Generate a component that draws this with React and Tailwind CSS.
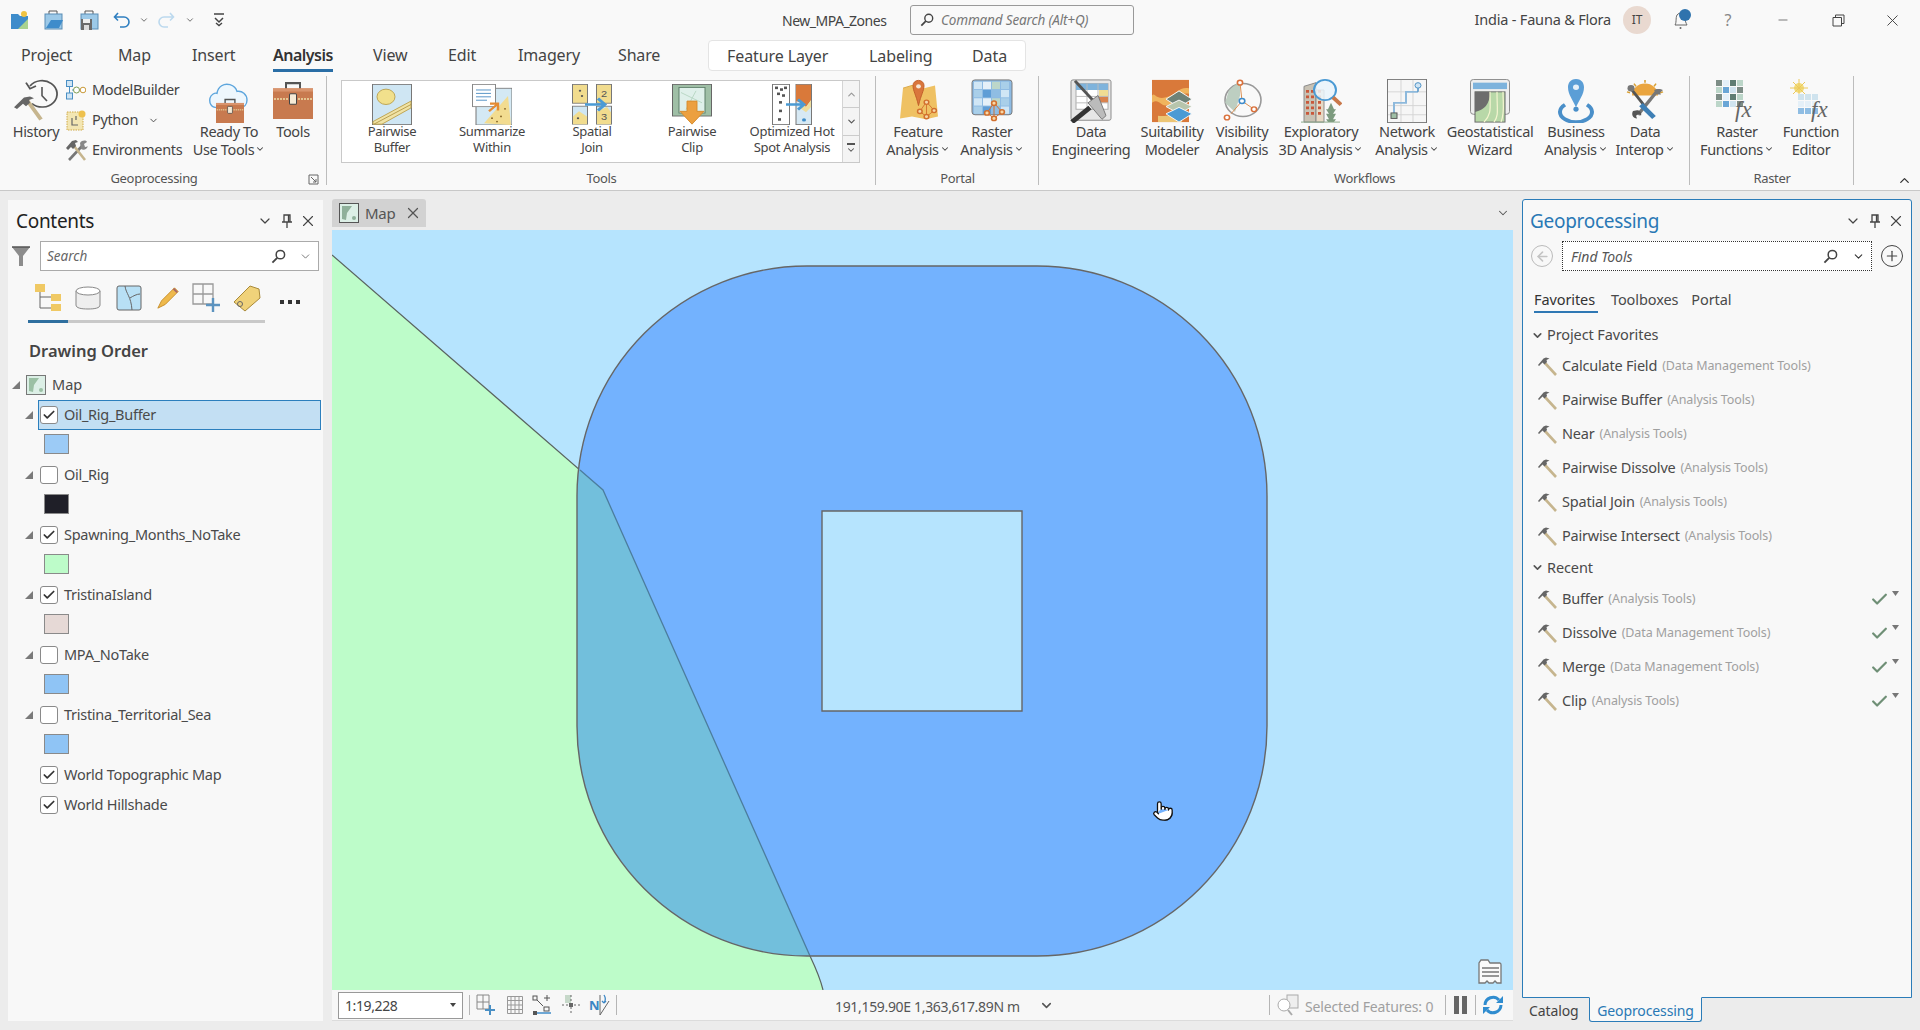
import React from "react";
import { ChevronDown, ChevronUp, X, Check, Minus, Pointer, ArrowLeft, Plus } from "lucide-react";

const Dn = ({ s = 10, c = "#444", w = 2 }) => <ChevronDown size={s} color={c} strokeWidth={w} className="shrink-0" />;

const Mag = ({ s = 16 }) => (
  <svg width={s} height={s} viewBox="0 0 16 16" fill="none" className="shrink-0">
    <circle cx="10" cy="6" r="4.5" stroke="#444" strokeWidth="1.6" />
    <path d="M6.6 9.4 1.5 14.5" stroke="#444" strokeWidth="2" />
  </svg>
);
const PinI = () => (
  <svg width="12" height="14" viewBox="0 0 12 14" fill="none" className="shrink-0">
    <path d="M3 1h6v7H3zM1 8h10M6 8v6M7.5 1v7" stroke="#444" strokeWidth="1.3" />
  </svg>
);
const Hammer = ({ s = 21 }) => (
  <svg width={s} height={s} viewBox="0 0 21 21" fill="none" className="shrink-0">
    <path d="M7.5 6.5 19 19" stroke="#c6b58e" strokeWidth="2.6" />
    <path d="M1 9 6.5 2.5 9 1.5 12.5 2.5 9.5 4 10 6 7.5 8.5 5.5 6.5 2 10z" fill="#666" />
  </svg>
);
const Tri = () => (
  <svg width="8" height="8" viewBox="0 0 8 8" className="shrink-0">
    <path d="M8 0v8H0z" fill="#7a7a7a" />
  </svg>
);
const Case = ({ x = 0, y = 0, w = 40, h = 36 }) => (
  <g transform={`translate(${x} ${y}) scale(${w / 40} ${h / 36})`}>
    <path d="M13 8V2h14v6" fill="none" stroke="#555" strokeWidth="2" />
    <rect x="0" y="7" width="40" height="29" fill="#c87a4f" />
    <rect x="0" y="7" width="40" height="3" fill="#d9946d" />
    <path d="M1 17h38" stroke="#eedfa8" strokeWidth="1.4" strokeDasharray="2 1" />
    <rect x="16.5" y="12" width="7" height="10" rx="1" fill="#f5ead6" stroke="#444" />
  </g>
);
const Net = ({ x = 0, y = 0, k = 1 }) => (
  <g transform={`translate(${x} ${y}) scale(${k})`} fill="none" stroke="#d2702e" strokeWidth="1.6">
    <path d="M10 2 3 13l7 6 8-7zM10 2l0 17" strokeWidth="1" />
    <circle cx="10" cy="2.5" r="2.4" fill="#f7d8a8" />
    <circle cx="3" cy="13" r="2.4" fill="#f7d8a8" />
    <circle cx="18" cy="12" r="2.4" fill="#f7d8a8" />
    <circle cx="10" cy="19" r="2.4" fill="#f7d8a8" />
  </g>
);
const Sv = ({ w = 42, h = 44, children }) => (
  <svg width={w} height={h} viewBox={`0 0 ${w} ${h}`} preserveAspectRatio="none" fill="none" className="shrink-0">{children}</svg>
);
const Grid = ({ x, y, n = 4, m = 4, c = 9, colors }) => {
  const out = [];
  for (let i = 0; i < n; i++) for (let j = 0; j < m; j++)
    out.push(<rect key={i + "-" + j} x={x + j * c} y={y + i * c} width={c - 1} height={c - 1} fill={colors[(i * 3 + j * 5) % colors.length]} />);
  return <g>{out}</g>;
};

const I = {
  PairBuffer: () => (
    <Sv w={40} h={48}>
      <rect x="0.5" y="0.5" width="39" height="47" fill="#cfe6f3" stroke="#777" />
      <circle cx="14" cy="15" r="9" fill="#f1e08c" stroke="#bba14e" />
      <path d="M1 44 39 20v8L10 47H1z" fill="#f0e3a6" stroke="#bba14e" />
      <path d="M2 47 39 24" stroke="#b49a4a" />
    </Sv>
  ),
  Summ: () => (
    <Sv w={40} h={48}>
      <rect x="4" y="5" width="36" height="43" fill="#d4e9f4" stroke="#777" />
      <path d="M12 46 36 14l3 34z" fill="#f2dc90" />
      <rect x="0.5" y="0.5" width="23" height="26" fill="#fff" stroke="#888" />
      <path d="M4 7h15M4 11h15M4 15h15M4 19h11" stroke="#4f8fc4" />
      <path d="M17 32l9-9m-8 0h8v8" stroke="#e58b33" strokeWidth="2.4" />
      <g fill="#8a6a2c"><circle cx="20" cy="40" r="1" /><circle cx="29" cy="38" r="1" /><circle cx="33" cy="29" r="1" /><circle cx="25" cy="44" r="1" /></g>
    </Sv>
  ),
  Join: () => (
    <Sv w={40} h={48}>
      <rect x="0.5" y="0.5" width="15" height="22" fill="#f1dc8e" stroke="#777" />
      <rect x="24.5" y="0.5" width="15" height="22" fill="#f1dc8e" stroke="#777" />
      <rect x="0.5" y="26" width="15" height="21" fill="#cfe6f3" stroke="#777" />
      <rect x="24.5" y="26" width="15" height="21" fill="#cfe6f3" stroke="#777" />
      <path d="M1 47v-9l6-6 8 6v9zM25 47V32l10-5 4 6v14z" fill="#f1dc8e" />
      <circle cx="8" cy="8" r="1.2" fill="#555" /><circle cx="6" cy="40" r="1.2" fill="#555" /><circle cx="10" cy="14" r="1.2" fill="#555" />
      <text x="29" y="15" fontSize="11" fill="#555" fontFamily="Liberation Sans">2</text>
      <text x="29" y="42" fontSize="11" fill="#555" fontFamily="Liberation Sans">3</text>
      <path d="M13 24h20m-7-7 7 7-7 7" stroke="#4a9ad4" strokeWidth="3" />
    </Sv>
  ),
  Clip: () => (
    <Sv w={40} h={48}>
      <rect x="0.5" y="0.5" width="39" height="37" fill="#9fbfa6" stroke="#666" />
      <rect x="7" y="4" width="26" height="30" fill="#dff0ea" stroke="#5d7f68" />
      <path d="M9 10 30 22M14 30 24 8" stroke="#b7d6c2" />
      <path d="M15 20h10v12h7L20 47 8 32h7z" fill="#eca03f" stroke="#d58a2c" />
    </Sv>
  ),
  Hot: () => (
    <Sv w={40} h={48}>
      <rect x="0.5" y="0.5" width="17" height="47" fill="#fff" stroke="#777" />
      <rect x="24" y="0.5" width="15.5" height="47" fill="#d7e9f4" stroke="#777" />
      <path d="M24 1h15v18l-5 8-5-5-5-2z" fill="#d9793a" />
      <path d="M29 22l5 5 5-8v8l-5 6-6-5z" fill="#eedd9b" />
      <g fill="#555">
        <rect x="3" y="3" width="3" height="3" /><rect x="8" y="5" width="3" height="3" /><rect x="12" y="3" width="3" height="3" /><rect x="5" y="10" width="3" height="3" /><rect x="10" y="12" width="3" height="3" /><rect x="7" y="20" width="3" height="3" /><rect x="7" y="30" width="3" height="3" /><rect x="6" y="40" width="3" height="3" />
      </g>
      <circle cx="32" cy="42" r="2" fill="#3f8dc9" />
      <path d="M14 24h18m-6-6 6 6-6 6" stroke="#4a9ad4" strokeWidth="3" />
    </Sv>
  ),
  Feature: () => (
    <Sv w={42} h={48}>
      <path d="M6 10 15 7l12 3 11-3 3 34-12 3-14-3-12 2z" fill="#efc163" />
      <path d="M6 10 15 7l12 3" stroke="#d9a645" />
      <path d="M16 4a5.5 5.500 0 0 1 11 0c0 6-3 10-5.500 22C19 14 16 10 16 4z" transform="translate(0 3)" fill="#d9763c" stroke="#c05f2a" />
      <circle cx="21.5" cy="8" r="2.4" fill="#f5e7d6" />
      <Net x={20} y={23} k={0.95} />
    </Sv>
  ),
  RasterA: () => (
    <Sv w={42} h={48}>
      <rect x="1" y="1" width="40" height="38" rx="3" fill="#8ebbe3" stroke="#777" />
      <Grid x={3} y={3} n={4} m={4} c={9} colors={["#d0e6f5", "#8fbde3", "#5f9ed6", "#a9cfe9", "#bcd6c9", "#e5f0f8"]} />
      <Net x={13} y={24} k={1} />
    </Sv>
  ),
  DataEng: () => (
    <Sv w={42} h={48}>
      <rect x="1" y="1" width="40" height="44" rx="2" fill="#e6e6e6" stroke="#888" />
      <rect x="6" y="5" width="32" height="28" fill="#fff" stroke="#aaa" />
      <rect x="6" y="5" width="32" height="7" fill="#7eb3dc" />
      <rect x="29" y="12" width="9" height="7" fill="#f0dc93" /><rect x="29" y="19" width="9" height="7" fill="#d9824d" />
      <path d="M6 19h32M6 26h32M17 5v28M28 5v28" stroke="#bbb" />
      <path d="M5 2 32 34" stroke="#555" strokeWidth="3" />
      <path d="M20 26 30 18l8 22-4 4z" fill="#bbb" stroke="#777" transform="translate(-2 0)" />
      <path d="M20 31 2 47" stroke="#333" strokeWidth="5" />
    </Sv>
  ),
  Suit: () => (
    <Sv w={40} h={48}>
      <rect x="0" y="1" width="37" height="46" fill="#d9793a" />
      <path d="M0 26c8-6 8 6 17 2s10-14 20-12v-6C27 8 25 17 14 20S3 14 0 18z" fill="#f0b45d" />
      <path d="M6 40c8 2 14-4 24 3v4H6z" fill="#ecc574" />
      <path d="M27 13 40 22 27 31 14 22z" fill="#6f8277" stroke="#f8f8f8" />
      <path d="M27 23 40 30 27 38 14 30z" fill="#b7c5ac" stroke="#f8f8f8" />
      <path d="M27 31 40 38 27 47 14 38z" fill="#4a9ad4" stroke="#f8f8f8" />
    </Sv>
  ),
  Vis: () => (
    <Sv w={40} h={48}>
      <circle cx="21" cy="23" r="18" stroke="#999" strokeWidth="1.6" />
      <path d="M7 12 18 2v16l-5 18-10-10z" fill="#b6c9ba" opacity=".9" />
      <path d="M9 38 20 24 32 33M20 24 18 4" stroke="#d98a4a" />
      <g fill="#fff" stroke="#d9703a" strokeWidth="1.6"><circle cx="18" cy="4" r="2.6" /><circle cx="32" cy="33" r="2.6" /><circle cx="5" cy="42" r="2.6" /></g>
      <circle cx="20" cy="24" r="2.8" fill="#fff" stroke="#3e8ccb" strokeWidth="1.6" />
    </Sv>
  ),
  Expl: () => (
    <Sv w={42} h={48}>
      <path d="M4 47V8l12-4v43z" fill="#c9c2b4" stroke="#888" />
      <path d="M16 12h8v35h-8z" fill="#e7d9c4" stroke="#888" />
      <g fill="#c9583a">
        {[12, 18, 24, 30, 36].map((y) => <React.Fragment key={y}><rect x="6" y={y} width="3" height="3" /><rect x="11" y={y} width="3" height="3" /><rect x="18" y={y} width="3" height="3" /></React.Fragment>)}
      </g>
      <circle cx="25" cy="12" r="11" fill="#eaf4fb" fillOpacity=".85" stroke="#4a9ad4" strokeWidth="2" />
      <path d="M33 20 41 28" stroke="#c9784a" strokeWidth="4" />
      <path d="M28 47 26 44h3l-3-6h3l-3-5h2l3-7 3 7h2l-3 5h3l-3 6h3l-2 3z" fill="#7d9b7f" />
      <path d="M1 47h39" stroke="#8aa88a" />
    </Sv>
  ),
  Network: () => (
    <Sv w={40} h={48}>
      <rect x="0.5" y="0.5" width="39" height="47" fill="#f6f6f6" stroke="#777" />
      <path d="M1 14h38M1 29h38M1 39h38M14 1v46M26 1v46" stroke="#d4d4d4" />
      <path d="M7 38V26h12V14h12" stroke="#8db9dc" strokeWidth="2" fill="none" />
      <path d="M31 14V8" stroke="#4a8fc4" strokeWidth="1.5" />
      <circle cx="31" cy="7" r="3" fill="#cfe4f3" stroke="#4a8fc4" />
      <rect x="4" y="37" width="6" height="6" fill="#9fbfa6" stroke="#555" />
    </Sv>
  ),
  Geo: () => (
    <Sv w={40} h={48}>
      <rect x="0.5" y="0.5" width="39" height="38" rx="3" fill="#eee" stroke="#888" />
      <rect x="3" y="4" width="34" height="7" fill="#7eb3dc" />
      <rect x="5" y="14" width="30" height="33" fill="#b8d8a8" stroke="#666" />
      <path d="M5 14h15c0 14-6 20-15 22z" fill="#6d6d6d" />
      <path d="M20 14c0 18 2 24-6 33M27 14c0 20 2 26-3 33M33 14c0 14 2 22-2 33" stroke="#f5f5d0" strokeWidth="1.2" />
    </Sv>
  ),
  Biz: () => (
    <Sv w={42} h={48}>
      <path d="M10 28a16 11 0 1 0 22 0" stroke="#4a8fc9" strokeWidth="4" />
      <path d="M21 0c6 0 8 5 8 9 0 8-5 14-8 22-3-8-8-14-8-22 0-4 2-9 8-9z" fill="#5b9ed6" />
      <circle cx="21" cy="9" r="3" fill="#e7f1f9" />
      <circle cx="21" cy="33" r="2.6" fill="#4a8fc9" />
    </Sv>
  ),
  Interop: () => (
    <Sv w={42} h={48}>
      <path d="M8 18a13 13 0 0 1 26 0z" fill="#eaa53f" />
      <path d="M21 1v3M10 5l2 3M32 5l-2 3M3 14l3 1M39 14l-3 1" stroke="#d9a034" strokeWidth="1.6" />
      <path d="M8 12 21 30" stroke="#555" strokeWidth="3" />
      <circle cx="7" cy="10" r="3.5" fill="#777" />
      <path d="M34 12 14 39" stroke="#777" strokeWidth="3.4" />
      <path d="M17 28l13 14" stroke="#3e7fb5" strokeWidth="5" />
      <path d="M9 35c-2 4 0 8 4 8l-1-3 3-2 2 2c1-3-1-6-4-6z" fill="#555" />
      <path d="M30 12c4-2 7-1 9 0l-3 3 1 2-4 0z" fill="#777" />
    </Sv>
  ),
  RasterF: () => (
    <Sv w={46} h={44}>
      <Grid x={2} y={1} n={4} m={4} c={7} colors={["#7d8d86", "#cfe3ee", "#6aa6d6", "#bcd6c9", "#5f7d73", "#e5f0f8"]} />
      <text x="21" y="38" fontSize="23" fontStyle="italic" fill="#666" fontFamily="Liberation Serif">fx</text>
    </Sv>
  ),
  FnEd: () => (
    <Sv w={46} h={44}>
      <circle cx="11" cy="9" r="5" fill="#f2dc7a" />
      <path d="M11 0v18M2 9h18M5 3l12 12M17 3 5 15" stroke="#ecc95c" />
      <Grid x={10} y={15} n={3} m={3} c={7} colors={["#cfe3ee", "#8fbde3", "#6aa6d6", "#e5f0f8", "#5f7d73"]} />
      <text x="23" y="38" fontSize="23" fontStyle="italic" fill="#666" fontFamily="Liberation Serif">fx</text>
    </Sv>
  ),
  History: () => (
    <Sv w={46} h={50}>
      <path d="M17 8a15 15 0 1 1 2 20" stroke="#555" strokeWidth="1.8" />
      <path d="M13 4l4 7 6-3" stroke="#555" strokeWidth="1.8" />
      <path d="M29 9v10l5 6" stroke="#555" strokeWidth="1.6" />
      <path d="M14 24 28 46" stroke="#c6b58e" strokeWidth="4" />
      <path d="M1 32 11 21l6-1 4 2-5 2 1 3-4 4-3-3-6 6z" fill="#666" />
    </Sv>
  ),
  Ready: () => (
    <Sv w={40} h={46}>
      <path d="M8 30C2 30 0 25 1 20c1-4 5-6 7-5 1-7 7-11 13-9 3 1 6 3 7 7 5-1 10 3 10 9 0 5-3 8-7 8" stroke="#5ea6dd" strokeWidth="1.4" fill="#eef7fd" />
      <Case x={7} y={20} w={28} h={26} />
    </Sv>
  ),
  Tools: () => <Sv w={42} h={40}><Case x={1} y={1} w={40} h={38} /></Sv>,
  MB: () => (
    <Sv w={20} h={20}>
      <rect x="0.5" y="0.5" width="6" height="6" fill="#cfe4f3" stroke="#4a8fc4" />
      <rect x="0.5" y="13" width="6" height="6" fill="#cfe4f3" stroke="#4a8fc4" />
      <path d="M3.5 7v6M6 10h2" stroke="#4a8fc4" />
      <circle cx="10.5" cy="10" r="3" fill="#fff" stroke="#7d9c54" />
      <circle cx="17" cy="10" r="2.8" fill="#fff" stroke="#c99a3a" />
    </Sv>
  ),
  Py: () => (
    <Sv w={20} h={22}>
      <rect x="1" y="3" width="16" height="18" fill="#f3e6b3" stroke="#d0aa49" strokeDasharray="1.5 1" />
      <path d="M6 9v7h6M10 7v4" stroke="#666" strokeWidth="1.2" />
      <circle cx="16" cy="5" r="3.5" fill="#eec14e" />
    </Sv>
  ),
  Env: () => (
    <Sv w={22} h={22}>
      <path d="M3 21 17 6" stroke="#777" strokeWidth="2.6" />
      <path d="M14 4c2-3 6-3 7-1l-3 2 1 3c2 0 3-1 3-1-1 3-4 5-7 3z" fill="#888" />
      <path d="M8 7 19 21" stroke="#c6b58e" strokeWidth="2.6" />
      <path d="M0 9 6 2l4-1 2 2-3 1 1 3-3 3-2-2-3 3z" fill="#666" />
    </Sv>
  ),
};

const Big = ({ w, icon, lines, chev, top = 0 }) => (
  <div className="flex flex-col items-center pt-[6px] shrink-0" style={{ width: w }}>
    <div className="h-[43px] flex items-start justify-center [&>svg]:max-h-[44px]" style={{ paddingTop: top }}>{icon}</div>
    <div className="text-[14.5px] leading-[18px] text-center whitespace-nowrap text-[#444] tracking-[-0.35px] flex flex-col items-center">
      <span>{lines[0]}</span>
      {lines[1] && <span className="flex items-center gap-[1px]">{lines[1]}{chev && <Dn s={10} w={2.5} />}</span>}
    </div>
  </div>
);

const Gal = ({ icon, a, b }) => (
  <div className="w-[100px] h-full flex flex-col items-center pt-[3px] shrink-0">
    <div className="h-[39px] [&>svg]:h-[41px] [&>svg]:w-[40px]">{icon}</div>
    <div className="text-[13px] leading-[16px] text-center whitespace-nowrap text-[#444] tracking-[-0.3px] flex flex-col">
      <span>{a}</span><span>{b}</span>
    </div>
  </div>
);

const Group = ({ w, label, children, launcher, sep = true }) => (
  <div className="relative flex flex-col shrink-0 h-full" style={{ width: w }}>
    <div className="h-[95px] flex">{children}</div>
    <div className="h-[22px] flex items-center">
      <span className="flex-1 text-center text-[13px] text-[#555] tracking-[-0.3px]">{label}</span>
      {launcher && (
        <span className="w-[18px] shrink-0 mr-[1px]">
          <svg width="11" height="11" viewBox="0 0 11 11" fill="none"><path d="M1 10V1h9v9zM3 3l5 5M8 5v3H5" stroke="#666" /></svg>
        </span>
      )}
    </div>
    {sep && <div className="absolute right-0 top-[3px] bottom-[5px] w-px bg-[#bdbdbd]" />}
  </div>
);

const Small = ({ icon, t, chev }) => (
  <div className="h-[30px] flex items-center">
    <div className="w-[26px] flex justify-start shrink-0">{icon}</div>
    <span className="text-[14.5px] text-[#444] tracking-[-0.35px] whitespace-nowrap">{t}</span>
    {chev && <span className="ml-[10px]"><Dn s={11} /></span>}
  </div>
);

const FolderQ = ({ kind }) => (
  <svg width="20" height="20" viewBox="0 0 20 20" fill="none" className="shrink-0">
    {kind === 0 && <><path d="M1 4h7l2 2h8v13H1z" fill="#3e8ccb" /><path d="M8 19 18 9v10z" fill="#a9d28f" /><circle cx="14" cy="4" r="3" fill="#f0c341" /></>}
    {kind === 1 && <><path d="M5 4V1h8v3" stroke="#555" /><rect x="1" y="4" width="17" height="15" fill="#9cc9e8" stroke="#5a8db5" /><path d="M2 18 7 10h12l-4 8z" fill="#3e8ccb" /></>}
    {kind === 2 && <><path d="M5 4V1h8v3" stroke="#555" /><rect x="1" y="4" width="17" height="15" fill="#9cc9e8" stroke="#5a8db5" /><rect x="1" y="9" width="11" height="11" fill="#6a6a6a" /><rect x="3" y="9" width="7" height="4" fill="#eee" /><rect x="4" y="15" width="5" height="5" fill="#ddd" /></>}
  </svg>
);

const TitleBar = () => (
  <div className="h-[40px] flex items-center shrink-0">
    <div className="w-[24px] ml-[8px] flex justify-center"><FolderQ kind={0} /></div>
    <div className="w-[24px] ml-[10px] flex justify-center"><FolderQ kind={1} /></div>
    <div className="w-[24px] ml-[12px] flex justify-center"><FolderQ kind={2} /></div>
    <div className="w-[24px] ml-[8px] flex justify-center">
      <svg width="18" height="18" viewBox="0 0 18 18" fill="none"><path d="M5 2 1.500 6 5 9.500M2 6h9a4.500 4.500 0 0 1 0 10H7" stroke="#2f7fc0" strokeWidth="1.6" /></svg>
    </div>
    <div className="w-[12px] ml-[4px] flex justify-center"><Dn s={10} c="#555" /></div>
    <div className="w-[24px] ml-[4px] flex justify-center">
      <svg width="18" height="18" viewBox="0 0 18 18" fill="none"><path d="M13 2l3.500 4L13 9.500M16 6H7a4.500 4.500 0 0 0 0 10h4" stroke="#bcd9ee" strokeWidth="1.6" /></svg>
    </div>
    <div className="w-[12px] ml-[6px] flex justify-center"><Dn s={10} c="#555" /></div>
    <div className="w-[24px] ml-[11px] flex justify-center">
      <svg width="12" height="14" viewBox="0 0 12 14" fill="none"><path d="M1 1h10M2 5l4 4 4-4" stroke="#444" strokeWidth="1.5" /><path d="M3 10l3 2.500 3-2.500" stroke="#444" strokeWidth="1.4" /></svg>
    </div>
    <div className="ml-[551px] w-[128px] text-[14px] text-[#444] tracking-[-0.5px] whitespace-nowrap">New_MPA_Zones</div>
    <div className="w-[224px] h-[30px] flex items-center border border-[#999] rounded-[3px] pl-[9px] gap-[7px]">
      <Mag s={14} />
      <span className="text-[13.5px] italic text-[#777] tracking-[-0.15px] whitespace-nowrap">Command Search (Alt+Q)</span>
    </div>
    <div className="ml-auto flex items-center pr-[16px]">
      <span className="text-[14.5px] text-[#444] tracking-[-0.2px] whitespace-nowrap">India - Fauna &amp; Flora</span>
      <div className="ml-[12px] w-[28px] h-[28px] rounded-full bg-[#e9d9d0] flex items-center justify-center text-[12px] text-[#444]">IT</div>
      <div className="ml-[18px] w-[24px] flex justify-center">
        <svg width="22" height="22" viewBox="0 0 22 22" fill="none"><path d="M5 16c2-3 0-9 3-11 3-2 6 0 7 4 0 3 1 5 2 7z" stroke="#666" /><circle cx="10.500" cy="19" r="1" fill="#666" /><circle cx="15" cy="6" r="6" fill="#2f73ad" /></svg>
      </div>
      <div className="ml-[23px] w-[24px] text-center text-[16px] text-[#888]">?</div>
      <div className="ml-[31px] w-[24px] flex justify-center"><Minus size={14} color="#444" strokeWidth={1.2} /></div>
      <div className="ml-[31px] w-[24px] flex justify-center">
        <svg width="13" height="13" viewBox="0 0 13 13" fill="none"><path d="M1 3.500h8.500V12H1zM3.500 3V1H12v8.500H9.500" stroke="#444" /></svg>
      </div>
      <div className="ml-[30px] w-[24px] flex justify-center"><X size={19} color="#444" strokeWidth={1.2} /></div>
    </div>
  </div>
);

const tabs = [["Project", 97], ["Map", 74], ["Insert", 81], ["Analysis", 100], ["View", 75], ["Edit", 70], ["Imagery", 100], ["Share", 90]];

const TabRow = () => (
  <div className="h-[33px] flex items-start pl-[21px] shrink-0">
    {tabs.map(([t, w]) => (
      <div key={t} className="h-[33px] flex items-start shrink-0" style={{ width: w }}>
        <span className={"h-[32px] pt-[4px] text-[16px] leading-[22px] whitespace-nowrap " + (t === "Analysis" ? "font-semibold text-[#333] border-b-[3px] border-[#2a6ea6] tracking-[-0.5px]" : "text-[#444] tracking-[-0.15px]")}>{t}</span>
      </div>
    ))}
    <div className="w-[318px] h-[31px] bg-white border border-[#e4e4e4] rounded-[4px] flex items-center pl-[18px] text-[16px] text-[#444] tracking-[-0.1px]">
      <span className="w-[142px]">Feature Layer</span>
      <span className="w-[103px]">Labeling</span>
      <span>Data</span>
    </div>
  </div>
);

const Ribbon = () => (
  <div className="h-[191px] bg-[#f9f9f9] border-b border-[#c8c8c8] flex flex-col shrink-0 relative">
    <TitleBar />
    <TabRow />
    <div className="h-[117px] flex">
      <Group w={327} label="Geoprocessing" launcher>
        <div className="ml-[6px]"><Big w={60} icon={<I.History />} lines={["History"]} /></div>
        <div className="w-[124px] pt-[2px] shrink-0">
          <Small icon={<I.MB />} t="ModelBuilder" />
          <Small icon={<I.Py />} t="Python" chev />
          <Small icon={<I.Env />} t="Environments" />
        </div>
        <Big w={78} icon={<I.Ready />} lines={["Ready To", "Use Tools"]} chev />
        <Big w={50} icon={<I.Tools />} lines={["Tools"]} top={1} />
      </Group>
      <Group w={549} label="Tools">
        <div className="ml-[14px] mt-[7px] w-[519px] h-[83px] bg-white border border-[#c9c9c9] flex">
          <Gal icon={<I.PairBuffer />} a="Pairwise" b="Buffer" />
          <Gal icon={<I.Summ />} a="Summarize" b="Within" />
          <Gal icon={<I.Join />} a="Spatial" b="Join" />
          <Gal icon={<I.Clip />} a="Pairwise" b="Clip" />
          <Gal icon={<I.Hot />} a="Optimized Hot" b="Spot Analysis" />
          <div className="ml-auto w-[17px] flex flex-col border-l border-[#d4d4d4] bg-[#f4f4f4] shrink-0">
            <div className="h-[27px] flex items-center justify-center border-b border-[#ccc]"><ChevronUp size={11} color="#999" strokeWidth={2.5} /></div>
            <div className="h-[28px] flex items-center justify-center border-b border-[#ccc]"><Dn s={11} c="#555" w={2.5} /></div>
            <div className="flex-1 flex flex-col items-center justify-center">
              <div className="w-[8px] h-[1.5px] bg-[#555]" /><Dn s={10} c="#555" w={2.5} />
            </div>
          </div>
        </div>
      </Group>
      <Group w={163} label="Portal">
        <div className="ml-[5px] flex">
          <Big w={74} icon={<I.Feature />} lines={["Feature", "Analysis"]} chev />
          <Big w={74} icon={<I.RasterA />} lines={["Raster", "Analysis"]} chev />
        </div>
      </Group>
      <Group w={651} label="Workflows">
        <div className="ml-[9px] flex">
          <Big w={86} icon={<I.DataEng />} lines={["Data", "Engineering"]} />
          <Big w={76} icon={<I.Suit />} lines={["Suitability", "Modeler"]} />
          <Big w={64} icon={<I.Vis />} lines={["Visibility", "Analysis"]} />
          <Big w={94} icon={<I.Expl />} lines={["Exploratory", "3D Analysis"]} chev />
          <Big w={78} icon={<I.Network />} lines={["Network", "Analysis"]} chev />
          <Big w={88} icon={<I.Geo />} lines={["Geostatistical", "Wizard"]} />
          <Big w={84} icon={<I.Biz />} lines={["Business", "Analysis"]} chev />
          <Big w={54} icon={<I.Interop />} lines={["Data", "Interop"]} chev />
        </div>
      </Group>
      <Group w={164} label="Raster">
        <div className="ml-[8px] flex">
          <Big w={78} icon={<I.RasterF />} lines={["Raster", "Functions"]} chev />
          <Big w={70} icon={<I.FnEd />} lines={["Function", "Editor"]} />
        </div>
      </Group>
      <div className="flex-1 flex items-end justify-end pr-[8px] pb-[2px]"><ChevronUp size={15} color="#333" strokeWidth={2} /></div>
    </div>
  </div>
);

const Box = ({ on }) => (
  <div className="w-[18px] h-[18px] bg-white border border-[#8a8a8a] rounded-[3px] flex items-center justify-center shrink-0">
    {on && <Check size={14} color="#333" strokeWidth={3} />}
  </div>
);

const Layer = ({ name, on, sel, tri = true }) => (
  <div className="h-[30px] flex items-center pl-[17px] pr-[2px]">
    <div className="w-[8px] flex shrink-0">{tri && <Tri />}</div>
    <div className={"ml-[5px] flex-1 h-[30px] pl-[1px] flex items-center border " + (sel ? "bg-[#c3dff3] border-[#2c7fbd]" : "border-transparent")}>
      <Box on={on} />
      <span className="ml-[6px] text-[14.5px] text-[#4a4a4a] tracking-[-0.28px] whitespace-nowrap">{name}</span>
    </div>
  </div>
);
const Patch = ({ c }) => (
  <div className="h-[30px] pl-[36px] pt-[4px]">
    <div className="w-[25px] h-[20px] border border-[#8a8a8a]" style={{ background: c }} />
  </div>
);

const PaneHead = ({ t, blue }) => (
  <div className={"h-[41px] flex items-center shrink-0 " + (blue ? "pl-[7px]" : "pl-[8px]")}>
    <span className={"text-[19px] pt-[1px] tracking-[-0.3px] " + (blue ? "text-[#2a78b5]" : "text-[#222]")}>{t}</span>
    <div className="ml-auto flex items-center">
      <Dn s={16} c="#444" w={1.8} />
      <span className="ml-[8px]"><PinI /></span>
      <span className="ml-[6px] mr-[6px]"><X size={18} color="#444" strokeWidth={1.5} /></span>
    </div>
  </div>
);

const Contents = () => (
  <div className="w-[315px] h-[821px] mt-[9px] bg-[#f8f8f8] shrink-0 flex flex-col">
    <PaneHead t="Contents" />
    <div className="h-[30px] flex items-center shrink-0">
      <div className="w-[32px] pl-[4px] flex">
        <svg width="18" height="21" viewBox="0 0 18 21" fill="none"><path d="M0 1h18L11 10v10H7V10z" fill="#8c8c8c" /><path d="M0 1h18" stroke="#555" strokeWidth="1.500" /></svg>
      </div>
      <div className="w-[279px] h-[30px] bg-white border border-[#aaa] flex items-center pl-[6px] pr-[6px]">
        <span className="text-[13.5px] italic text-[#666]">Search</span>
        <span className="ml-auto mr-[13px]"><Mag s={15} /></span>
        <Dn s={13} c="#777" w={1.8} />
      </div>
    </div>
    <div className="h-[29px] mt-[12px] flex items-center pl-[26px] shrink-0">
      <svg width="30" height="30" viewBox="0 0 30 30" fill="none" className="shrink-0"><rect x="1" y="1" width="10" height="8" fill="#f0c964" /><rect x="17" y="11" width="10" height="7" fill="#f0c964" /><rect x="17" y="21" width="10" height="7" fill="#f0c964" /><path d="M6 9v16h11M6 14h11" stroke="#666" /></svg>
      <svg width="26" height="26" viewBox="0 0 26 26" fill="none" className="ml-[11px] shrink-0"><path d="M1 6v14c0 3 5 4 12 4s12-1 12-4V6" fill="#eee" stroke="#888" /><ellipse cx="13" cy="6" rx="12" ry="4" fill="#fff" stroke="#888" /></svg>
      <svg width="26" height="26" viewBox="0 0 26 26" fill="none" className="ml-[15px] shrink-0"><rect x="1" y="1" width="24" height="24" rx="2" fill="#b8e0f5" stroke="#666" /><path d="M9 1c1 8 6 10 7 24M14 13c3-2 7-4 10-4" stroke="#666" /></svg>
      <svg width="24" height="26" viewBox="0 0 26 26" fill="none" className="ml-[14px] shrink-0"><path d="M2 24l4-8L20 2l4 4L10 20z" fill="#eeb94c" stroke="#c78d2a" /><path d="M19 3l4 4" stroke="#a66" strokeWidth="2" /></svg>
      <svg width="30" height="30" viewBox="0 0 30 30" fill="none" className="ml-[12px] shrink-0"><path d="M1 1h20v20H1zM11 1v20M1 11h20" stroke="#999" strokeWidth="1.300" /><path d="M21 15v14M14 22h14" stroke="#5c93bf" strokeWidth="2.400" /></svg>
      <svg width="28" height="28" viewBox="0 0 28 28" fill="none" className="ml-[11px] shrink-0"><path d="M1 18 17 2l9 3 1 9-15 13z" fill="#f0d27a" stroke="#a98a3a" /><circle cx="7" cy="20" r="2.500" stroke="#666" /></svg>
      <div className="ml-[19px] flex gap-[4px] mt-[8px]"><i className="w-[4px] h-[4px] bg-[#333]" /><i className="w-[4px] h-[4px] bg-[#333]" /><i className="w-[4px] h-[4px] bg-[#333]" /></div>
    </div>
    <div className="ml-[20px] mt-[8px] w-[237px] h-[3px] bg-[#c9c9c9] shrink-0"><div className="w-[40px] h-[3px] bg-[#2f6f9f]" /></div>
    <div className="h-[47px] pt-[9px] pl-[21px] flex items-center text-[16.5px] font-semibold text-[#444] shrink-0">Drawing Order</div>
    <div className="h-[30px] flex items-center pl-[4px] shrink-0">
      <Tri />
      <svg width="20" height="20" viewBox="0 0 20 20" fill="none" className="ml-[6px] shrink-0"><rect x=".5" y=".5" width="19" height="19" fill="#dcefe6" stroke="#777" /><path d="M3 3h10L8 10l-1 7-4-1z" fill="#9bc0a4" /><circle cx="15" cy="15" r="2" fill="#9bc0a4" /></svg>
      <span className="ml-[6px] text-[14.5px] text-[#4a4a4a]">Map</span>
    </div>
    <Layer name="Oil_Rig_Buffer" on sel />
    <Patch c="#9ccbf6" />
    <Layer name="Oil_Rig" />
    <Patch c="#1f1f28" />
    <Layer name="Spawning_Months_NoTake" on />
    <Patch c="#bdfcc9" />
    <Layer name="TristinaIsland" on />
    <Patch c="#e6d9d6" />
    <Layer name="MPA_NoTake" />
    <Patch c="#8fc4f5" />
    <Layer name="Tristina_Territorial_Sea" />
    <Patch c="#8fc4f5" />
    <Layer name="World Topographic Map" on tri={false} />
    <Layer name="World Hillshade" on tri={false} />
  </div>
);

const BUFFER = "M807 266H1037A230 230 0 0 1 1267 496V726A230 230 0 0 1 1037 956H807A230 230 0 0 1 577 726V496A230 230 0 0 1 807 266Z M822 511H1022V711H822Z";
const GREEN = "M332 255 603 490 810 956Q820 977 823 990H332Z";

const MapView = () => (
  <div className="h-[760px] relative shrink-0">
    <svg width="1181" height="760" viewBox="332 230 1181 760" className="block">
      <defs><clipPath id="gc"><path d={GREEN} /></clipPath></defs>
      <rect x="332" y="230" width="1181" height="760" fill="#b6e4fe" />
      <path d={GREEN} fill="#bdfcc9" />
      <path d="M332 255 603 490 810 956Q820 977 823 990" fill="none" stroke="#5a6460" strokeWidth="1.2" />
      <path d={BUFFER} fill="#73b2fe" fillRule="evenodd" />
      <path d={BUFFER} fill="#72bfdc" fillRule="evenodd" clipPath="url(#gc)" />
      <path d="M580 470 603 490 810 956" fill="none" stroke="#4c7d9e" strokeWidth="1.3" />
      <path d={BUFFER} fill="none" stroke="#666" strokeWidth="1.4" />
    </svg>
    <Pointer size={22} color="#111" fill="#fff" strokeWidth={1.4} className="absolute left-[820px] top-[570px]" />
    <svg width="28" height="26" viewBox="0 0 28 26" fill="none" className="absolute left-[1144px] top-[728px]">
      <path d="M3 25V5l2-3h7l2 3h10a2 2 0 0 1 1 2v18h-4l-2-2-2 2h-4l-2-2-2 2z" fill="#fafafa" stroke="#777" strokeWidth="1.300" />
      <path d="M6 10h17M6 14h17M6 18h17" stroke="#777" strokeWidth="1.500" />
    </svg>
  </div>
);

const Sep = ({ cls = "" }) => <div className={"w-px h-[20px] bg-[#b5b5b5] shrink-0 " + cls} />;

const Status = () => (
  <div className="h-[31px] bg-[#f7f7f7] border-b border-[#dcdcdc] flex items-center shrink-0">
    <div className="ml-[6px] w-[125px] h-[27px] bg-white border border-[#999] flex items-center pl-[6px] pr-[6px] text-[14px] text-[#444] tracking-[-0.4px]">
      1:19,228
      <svg width="6" height="4" viewBox="0 0 6 4" className="ml-auto"><path d="M0 0h6L3 4z" fill="#444" /></svg>
    </div>
    <Sep cls="ml-[6px]" />
    <svg width="20" height="22" viewBox="0 0 20 22" fill="none" className="ml-[6px] shrink-0"><path d="M1 1h12v14H1zM7 1v14M1 8h12" stroke="#888" /><path d="M14 11v10M9 16h10" stroke="#4a8fc4" strokeWidth="2" /></svg>
    <svg width="16" height="18" viewBox="0 0 16 18" fill="none" className="ml-[11px] shrink-0"><path d="M.5.5h15v17H.5zM4 .5v17M8 .5v17M12 .5v17M.5 4.500h15M.5 9h15M.5 13.500h15" stroke="#999" /></svg>
    <svg width="20" height="20" viewBox="0 0 20 20" fill="none" className="ml-[9px] shrink-0"><rect x="1" y="1" width="4" height="4" stroke="#555" /><path d="M12 3h6M15 0v6M5 5l6 6" stroke="#555" /><rect x="12" y="12" width="5" height="4" stroke="#555" /><path d="M1 18h18" stroke="#6ea7d4" strokeWidth="2" /><rect x="1" y="16" width="4" height="4" fill="#555" /></svg>
    <svg width="20" height="22" viewBox="0 0 20 22" fill="none" className="ml-[9px] shrink-0"><rect x="4" y="1" width="6" height="8" fill="#c6d8c9" /><path d="M1 11h18" stroke="#666" strokeDasharray="2 2" /><path d="M10 1v20" stroke="#666" strokeDasharray="2 2" /><rect x="8" y="9" width="4" height="4" fill="#666" /></svg>
    <span className="ml-[8px] w-[9px] text-[13px] font-bold text-[#3b86c4] leading-none">N</span>
    <svg width="11" height="22" viewBox="0 0 11 22" fill="none" className="ml-[1px] shrink-0"><path d="M1 1v20l9-14" stroke="#666" /><path d="M5 1c2 3 2 5 0 8m0 0-2-2m2 2 2-2" stroke="#3b86c4" strokeWidth="1.300" /></svg>
    <Sep cls="ml-[6px]" />
    <span className="ml-[218px] w-[204px] text-[14px] text-[#555] tracking-[-0.33px] whitespace-nowrap pt-[2px]">191,159.90E 1,363,617.89N m</span>
    <Dn s={15} c="#555" w={2.5} />
    <Sep cls="ml-[215px]" />
    <svg width="24" height="24" viewBox="0 0 24 24" fill="none" className="ml-[5px] shrink-0"><rect x="12" y="2" width="11" height="13" fill="#eee" stroke="#aaa" /><circle cx="9" cy="12" r="6" fill="#fff" stroke="#aaa" /><path d="M13 17l4 5" stroke="#aaa" strokeWidth="2" /></svg>
    <span className="ml-[6px] w-[131px] text-[14px] text-[#a0a0a0] tracking-[-0.15px] whitespace-nowrap pt-[2px]">Selected Features: 0</span>
    <Sep cls="ml-[9px]" />
    <div className="ml-[8px] flex gap-[3px] shrink-0"><i className="w-[5px] h-[18px] bg-[#666]" /><i className="w-[5px] h-[18px] bg-[#666]" /></div>
    <Sep cls="ml-[8px]" />
    <svg width="22" height="22" viewBox="0 0 22 22" fill="none" className="ml-[6px] shrink-0"><path d="M3 11A8 8 0 0 1 17 6M19 11A8 8 0 0 1 5 16" stroke="#2f8ccf" strokeWidth="3" /><path d="M14 9h7V2zM8 13H1v7z" fill="#2f8ccf" /></svg>
  </div>
);

const Center = () => (
  <div className="w-[1181px] ml-[9px] shrink-0 flex flex-col">
    <div className="h-[39px] pt-[8px] flex items-start shrink-0">
      <div className="w-[94px] h-[28px] bg-[#d2d2d2] rounded-t-[3px] flex items-center pl-[7px]">
        <svg width="20" height="20" viewBox="0 0 20 20" fill="none" className="shrink-0"><rect x=".5" y=".5" width="19" height="19" fill="#dcefe6" stroke="#555" /><path d="M3 3h10L8 10l-1 7-4-1z" fill="#8fb09a" /><circle cx="15" cy="15" r="2" fill="#8fb09a" /></svg>
        <span className="ml-[6px] text-[15px] text-[#555] tracking-[-0.3px]">Map</span>
        <span className="ml-[9px]"><X size={18} color="#555" strokeWidth={1.6} /></span>
      </div>
      <div className="ml-auto mr-[3px] mt-[7px]"><Dn s={14} c="#555" w={1.8} /></div>
    </div>
    <MapView />
    <Status />
  </div>
);

const Tool = ({ n, g, check }) => (
  <div className="h-[34px] flex items-center pl-[14px] pr-[12px]">
    <Hammer />
    <span className="ml-[4px] text-[14.5px] text-[#4a4a4a] tracking-[-0.2px] whitespace-nowrap">{n}</span>
    <span className="ml-[5px] text-[12.5px] text-[#a0a0a0] tracking-[-0.1px] whitespace-nowrap">({g})</span>
    {check && (
      <div className="ml-auto flex items-start">
        <Check size={19} color="#6f8f76" strokeWidth={2.8} />
        <svg width="7" height="5" viewBox="0 0 7 5" className="ml-[3px] mt-[1px]"><path d="M0 0h7L3.500 5z" fill="#777" /></svg>
      </div>
    )}
  </div>
);

const Head = ({ t, cls = "" }) => (
  <div className={"flex items-center pl-[8px] " + cls}>
    <Dn s={13} c="#555" w={3} />
    <span className="ml-[3px] text-[14.5px] text-[#4a4a4a] tracking-[-0.1px]">{t}</span>
  </div>
);

const Geop = () => (
  <div className="w-[390px] ml-[9px] mt-[8px] shrink-0 flex flex-col">
    <div className="h-[799px] bg-[#f8f8f8] border border-[#2b7cb8] rounded-t-[3px] flex flex-col relative z-0">
      <PaneHead t="Geoprocessing" blue />
      <div className="h-[30px] flex items-center pl-[8px] shrink-0">
        <div className="w-[22px] h-[22px] rounded-full border border-[#bbb] flex items-center justify-center shrink-0"><ArrowLeft size={15} color="#c4c4c4" strokeWidth={2.5} /></div>
        <div className="ml-[9px] w-[310px] h-[30px] bg-white border border-dotted border-[#333] flex items-center pl-[8px] pr-[6px]">
          <span className="text-[14px] italic text-[#555]">Find Tools</span>
          <span className="ml-auto mr-[14px]"><Mag s={15} /></span>
          <Dn s={13} c="#333" w={2} />
        </div>
        <div className="ml-[9px] w-[22px] h-[22px] rounded-full border-[1.5px] border-[#444] flex items-center justify-center shrink-0"><Plus size={16} color="#444" strokeWidth={1.8} /></div>
      </div>
      <div className="mt-[16px] h-[26px] flex pl-[11px] text-[14.5px] text-[#4a4a4a] tracking-[-0.1px] shrink-0">
        <span className="w-[64px] h-[26px] pt-[2px] border-b-[2px] border-[#2f78b4] text-[#333] whitespace-nowrap">Favorites</span>
        <span className="ml-[13px] pt-[2px]">Toolboxes</span>
        <span className="ml-[13px] pt-[2px]">Portal</span>
      </div>
      <Head t="Project Favorites" cls="h-[28px] mt-[8px]" />
      <Tool n="Calculate Field" g="Data Management Tools" />
      <Tool n="Pairwise Buffer" g="Analysis Tools" />
      <Tool n="Near" g="Analysis Tools" />
      <Tool n="Pairwise Dissolve" g="Analysis Tools" />
      <Tool n="Spatial Join" g="Analysis Tools" />
      <Tool n="Pairwise Intersect" g="Analysis Tools" />
      <Head t="Recent" cls="h-[29px]" />
      <Tool n="Buffer" g="Analysis Tools" check />
      <Tool n="Dissolve" g="Data Management Tools" check />
      <Tool n="Merge" g="Data Management Tools" check />
      <Tool n="Clip" g="Analysis Tools" check />
    </div>
    <div className="h-[25px] flex -mt-px relative z-10 text-[14px] tracking-[-0.1px]">
      <span className="ml-[7px] w-[60px] pt-[3px] text-[#444]">Catalog</span>
      <span className="w-[113px] h-[25px] bg-[#f8f8f8] border border-[#2b7cb8] border-t-[#f8f8f8] rounded-b-[3px] text-center pt-[2px] text-[#2a78b5] whitespace-nowrap">Geoprocessing</span>
    </div>
  </div>
);

export default function App() {
  return (
    <div className="w-[1920px] h-[1030px] overflow-hidden bg-[#ececec] flex flex-col font-['Noto_Sans',sans-serif]">
      <Ribbon />
      <div className="flex flex-1 pl-[8px] min-h-0">
        <Contents />
        <Center />
        <Geop />
      </div>
    </div>
  );
}
